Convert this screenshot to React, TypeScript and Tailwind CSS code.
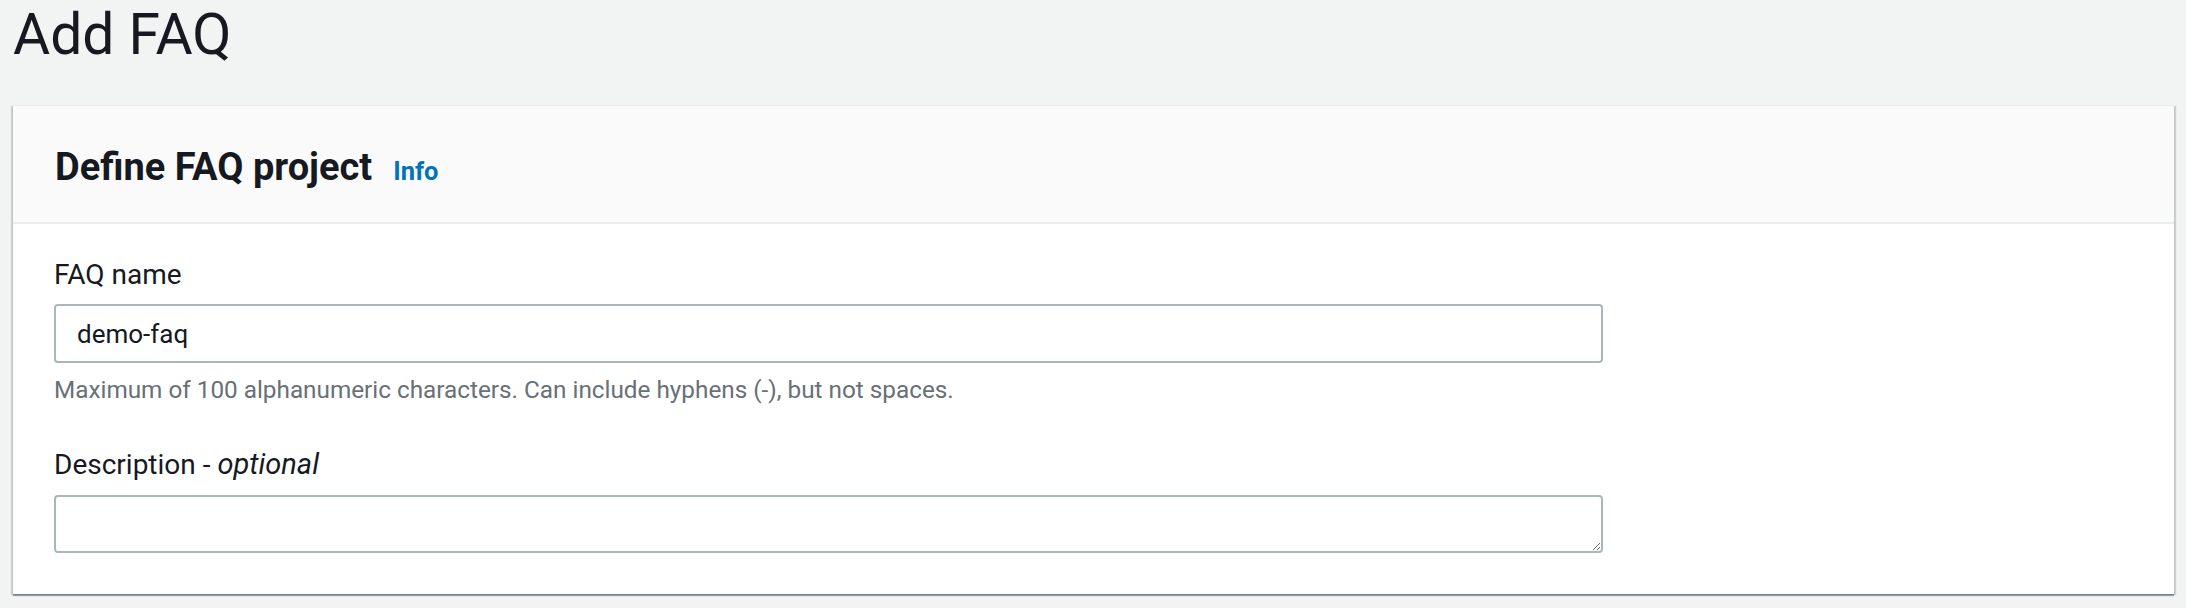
export default function App() {
  return (
    <main className="h-[608px] w-full overflow-hidden bg-[#f2f3f3] font-['Roboto',sans-serif] text-[#16191f]">
      {/* PAGE TITLE */}
      <h1 className="h-[105px] pl-[13px] pt-[1px] text-[57px] leading-[68px] font-normal">Add FAQ</h1>

      {/* CONTAINER */}
      <section className="ml-[13px] mr-[12px] border-t border-[#eaeded] bg-white shadow-[0_2px_1px_0_rgba(0,28,36,0.35),2px_1px_1px_0_rgba(0,28,36,0.15),-2px_1px_1px_0_rgba(0,28,36,0.15)]">
        <header className="flex h-[118px] items-baseline gap-[21px] border-b-2 border-[#eaeded] bg-[#fafafa] pl-[42px] pt-[39px]">
          <h2 className="text-[38px] leading-[44px] font-bold">Define FAQ project</h2>
          <a href="#" className="text-[25.5px] font-bold text-[#0073bb]">
            Info
          </a>
        </header>

        <div className="pb-[41px] pl-[41px] pt-[32px]">
          <label className="block text-[28px] leading-[37px]">FAQ name</label>
          <input
            defaultValue="demo-faq"
            className="mt-[11px] block h-[59px] w-[1549px] rounded-[4px] border-2 border-[#aab7b8] bg-white pl-[21px] text-[26px] text-[#16191f] outline-none"
          />
          <p className="mt-[11px] text-[24.3px] leading-[32px] text-[#687078]">
            Maximum of 100 alphanumeric characters. Can include hyphens (-), but not spaces.
          </p>

          <label className="mt-[40px] block text-[28px] leading-[37px]">
            Description - <i className="text-[29px]">optional</i>
          </label>
          <textarea className="mt-[12px] block h-[58px] w-[1549px] rounded-[4px] border-2 border-[#aab7b8] bg-white px-[21px] text-[27px] outline-none" />
        </div>
      </section>
    </main>
  );
}
